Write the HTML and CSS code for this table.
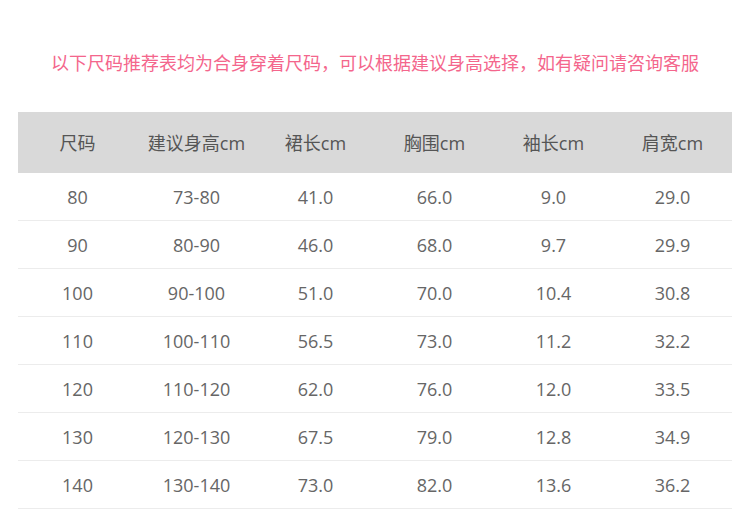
FILE: index.html
```html
<!DOCTYPE html>
<html lang="zh">
<head>
<meta charset="utf-8">
<link rel="stylesheet" href="styles.css">
</head>
<body>
<div class="page">
  <p class="notice">以下尺码推荐表均为合身穿着尺码，可以根据建议身高选择，如有疑问请咨询客服</p>
  <table class="size-table">
    <thead>
      <tr><th>尺码</th><th>建议身高cm</th><th>裙长cm</th><th>胸围cm</th><th>袖长cm</th><th>肩宽cm</th></tr>
    </thead>
    <tbody>
      <tr><td>80</td><td>73-80</td><td>41.0</td><td>66.0</td><td>9.0</td><td>29.0</td></tr>
      <tr><td>90</td><td>80-90</td><td>46.0</td><td>68.0</td><td>9.7</td><td>29.9</td></tr>
      <tr><td>100</td><td>90-100</td><td>51.0</td><td>70.0</td><td>10.4</td><td>30.8</td></tr>
      <tr><td>110</td><td>100-110</td><td>56.5</td><td>73.0</td><td>11.2</td><td>32.2</td></tr>
      <tr><td>120</td><td>110-120</td><td>62.0</td><td>76.0</td><td>12.0</td><td>33.5</td></tr>
      <tr><td>130</td><td>120-130</td><td>67.5</td><td>79.0</td><td>12.8</td><td>34.9</td></tr>
      <tr><td>140</td><td>130-140</td><td>73.0</td><td>82.0</td><td>13.6</td><td>36.2</td></tr>
    </tbody>
  </table>
</div>
</body>
</html>
```
FILE: styles.css
```css
html, body {
  margin: 0;
  padding: 0;
  background: #fff;
}
body {
  font-family: "Open Sans", "Noto Sans CJK SC", sans-serif;
}
.page {
  width: 750px;
  padding-top: 50px;
}
.notice {
  margin: 0;
  height: 24px;
  line-height: 24px;
  text-align: center;
  font-family: "Noto Sans CJK SC", sans-serif;
  font-size: 18px;
  color: #f4668c;
}
.size-table {
  margin: 38px 0 0 18px;
  width: 714px;
  border-collapse: collapse;
  table-layout: fixed;
}
.size-table th {
  height: 61px;
  padding: 0;
  background: #d9d9d9;
  font-weight: normal;
  font-size: 18px;
  line-height: 24px;
  color: #555;
  text-align: center;
}
.size-table td {
  height: 47px;
  padding: 0;
  border-bottom: 1px solid #ececec;
  font-size: 18px;
  line-height: 24px;
  color: #666;
  text-align: center;
}
```
